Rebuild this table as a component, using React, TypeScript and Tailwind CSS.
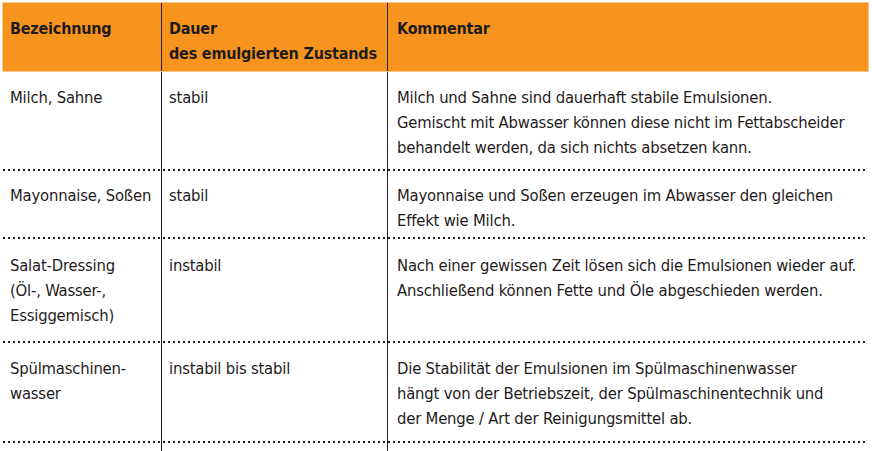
import React from 'react'

const rows = [
    {
        name: ['Milch, Sahne'],
        duration: 'stabil',
        comment: [
            'Milch und Sahne sind dauerhaft stabile Emulsionen.',
            'Gemischt mit Abwasser können diese nicht im Fettabscheider',
            'behandelt werden, da sich nichts absetzen kann.',
        ],
        height: 'h-[100px]',
        pad: 'pt-[14px]',
    },
    {
        name: ['Mayonnaise, Soßen'],
        duration: 'stabil',
        comment: [
            'Mayonnaise und Soßen erzeugen im Abwasser den gleichen',
            'Effekt wie Milch.',
        ],
        height: 'h-[68px]',
        pad: 'pt-[12px]',
    },
    {
        name: ['Salat-Dressing', '(Öl-, Wasser-,', 'Essiggemisch)'],
        duration: 'instabil',
        comment: [
            'Nach einer gewissen Zeit lösen sich die Emulsionen wieder auf.',
            'Anschließend können Fette und Öle abgeschieden werden.',
        ],
        height: 'h-[104px]',
        pad: 'pt-[14px]',
    },
    {
        name: ['Spülmaschinen-', 'wasser'],
        duration: 'instabil bis stabil',
        comment: [
            'Die Stabilität der Emulsionen im Spülmaschinenwasser',
            'hängt von der Betriebszeit, der Spülmaschinentechnik und',
            'der Menge / Art der Reinigungsmittel ab.',
        ],
        height: 'h-[100px]',
        pad: 'pt-[13px]',
    },
]

const grid = 'grid grid-cols-[158px_226px_1fr]'
const dotted =
    'bg-[linear-gradient(to_right,#231f20_2px,transparent_2px)] bg-[length:5px_2px] bg-repeat-x bg-bottom'

const Lines = ({ items }: { items: string[] }) => (
    <>
        {items.map((t) => (
            <p key={t} className="whitespace-nowrap">
                {t}
            </p>
        ))}
    </>
)

const App = () => {
    return (
        <div
            className="h-[451px] w-[872px] overflow-hidden bg-white pl-[3px] pt-[3px] text-[16.5px] leading-[25px] tracking-[-0.2px] text-[#1f1b1c]"
            style={{ fontFamily: '"DejaVu Sans Condensed", "DejaVu Sans", sans-serif' }}
        >
            <div className="w-[865px]">
                {/* Header */}
                <div className={`${grid} h-[68px] whitespace-nowrap bg-[#f7941e] text-[16px] font-bold outline outline-1 outline-[#fbc58a]`}>
                    <div className="pl-[7px] pt-[13px]">Bezeichnung</div>
                    <div className="border-l-[1.5px] border-[#231f20] pl-[7px] pt-[13px]">
                        <p>Dauer</p>
                        <p>des emulgierten Zustands</p>
                    </div>
                    <div className="border-l-[1.5px] border-[#231f20] pl-[9px] pt-[13px]">Kommentar</div>
                </div>

                {/* Rows */}
                {rows.map((row) => (
                    <div key={row.duration + row.name[0]} className={`${grid} ${row.height} ${dotted}`}>
                        <div className={`pl-[7px] ${row.pad}`}>
                            <Lines items={row.name} />
                        </div>
                        <div className={`whitespace-nowrap border-l-[1.5px] border-[#231f20] pl-[7px] ${row.pad}`}>
                            {row.duration}
                        </div>
                        <div className={`border-l-[1.5px] border-[#231f20] pl-[9px] ${row.pad}`}>
                            <Lines items={row.comment} />
                        </div>
                    </div>
                ))}

                {/* Column lines run on past the last row */}
                <div className={`${grid} h-[10px]`}>
                    <div />
                    <div className="border-l-[1.5px] border-[#231f20]" />
                    <div className="border-l-[1.5px] border-[#231f20]" />
                </div>
            </div>
        </div>
    )
}

export default App
